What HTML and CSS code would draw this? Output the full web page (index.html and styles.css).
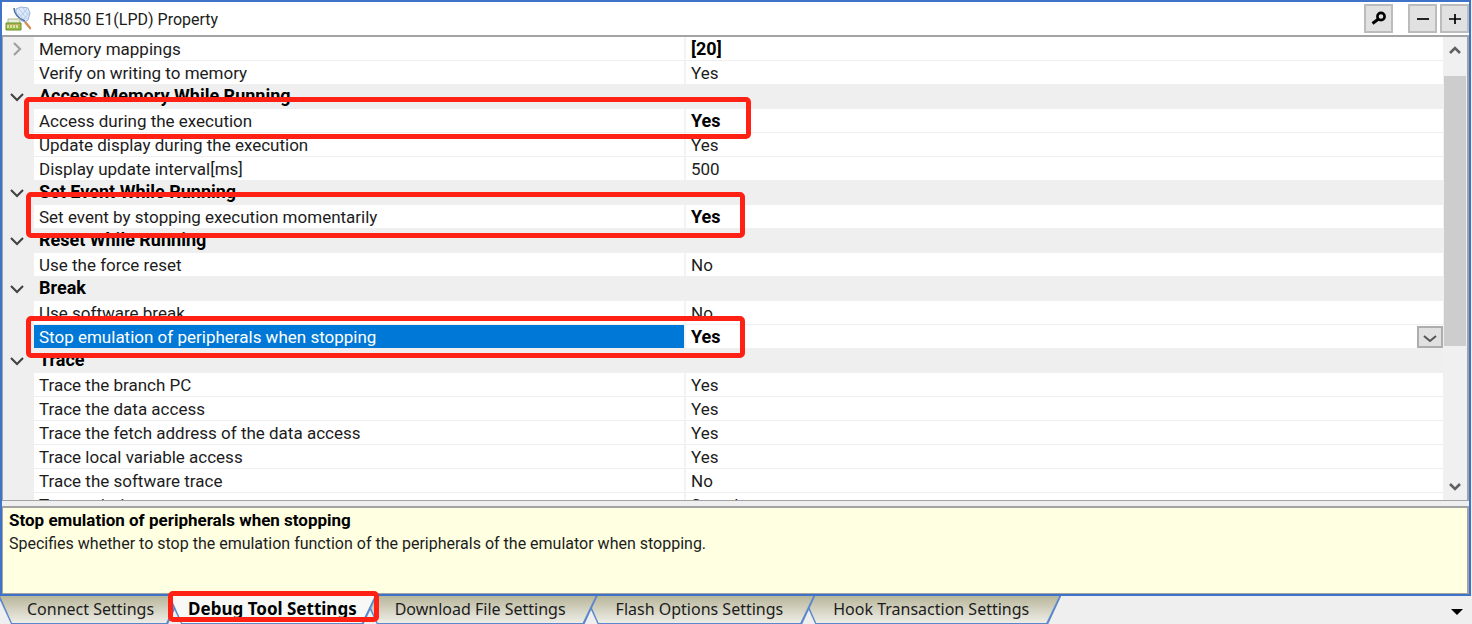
FILE: index.html
```
<!DOCTYPE html>
<html lang="en">
<head>
<meta charset="utf-8">
<title>RH850 E1(LPD) Property</title>
<link rel="stylesheet" href="styles.css">
</head>
<body>
<main class="panel">
  <header class="titlebar">
    <svg class="logo" width="26" height="26" viewBox="0 0 26 26" aria-hidden="true">
      <path d="M11 3l5-2 7 1 2 5-2 7-3 2-3-1-6-8z" fill="#dce9fb" stroke="#9ab2d8"/>
      <path d="M14 3l8 10M18 2l5 7M13 7l6 7M22 3l-6 7M24 7l-5 6" stroke="#a9bfe2" stroke-width=".7"/>
      <path d="M9 2c0 5 4 11 11 13" fill="none" stroke="#5573a9" stroke-width="1.600"/>
      <path d="M20 16l6 7" stroke="#d58b52" stroke-width="2.400"/>
      <path d="M3 13h12v5H3z" fill="#e9eddc" stroke="#a9b78c"/>
      <path d="M1 17h15v7H1z" fill="#9abb45" stroke="#6c9128"/>
      <path d="M2 19h13" stroke="#d9a46c"/>
      <path d="M3 19v3M6 19v3M9 19v3M12 19v3" stroke="#eef4ce" stroke-width="1.400"/>
    </svg>
    <h1 class="title">RH850 E1(LPD) Property</h1>
    <button class="tool search" aria-label="Search"><svg width="18" height="18" viewBox="0 0 18 18"><circle cx="11" cy="6.500" r="3.600" fill="none" stroke="#000" stroke-width="2.600"/><path d="M8.500 9L2.500 13.500" stroke="#000" stroke-width="3"/></svg></button>
    <button class="tool" aria-label="Collapse all"><svg width="18" height="18" viewBox="0 0 18 18"><path d="M3 9h12" stroke="#000" stroke-width="1.700"/></svg></button>
    <button class="tool" aria-label="Expand all"><svg width="18" height="18" viewBox="0 0 18 18"><path d="M3 9h12M9 4v10" stroke="#000" stroke-width="1.700"/></svg></button>
  </header>

  <section class="grid-box">
    <div class="grid">
      <table class="props">
        <colgroup><col class="c-gutter"><col class="c-name"><col></colgroup>
        <tbody>
        <tr><td class="gutter"><svg class="chev" width="16" height="16" viewBox="0 0 16 16"><path d="M5 2l6 6-6 6" fill="none" stroke="#a0a0a0" stroke-width="2.200"/></svg></td><td>Memory mappings</td><td><b>[20]</b></td></tr>
        <tr><td class="gutter"></td><td>Verify on writing to memory</td><td>Yes</td></tr>
        <tr class="group"><td class="gutter"><svg class="chev" width="16" height="16" viewBox="0 0 16 16"><path d="M2 5l6 6 6-6" fill="none" stroke="#444" stroke-width="2.200"/></svg></td><th colspan="2">Access Memory While Running</th></tr>
        <tr class="call call-wide"><td class="gutter"></td><td>Access during the execution</td><td><b>Yes</b></td></tr>
        <tr><td class="gutter"></td><td>Update display during the execution</td><td>Yes</td></tr>
        <tr><td class="gutter"></td><td>Display update interval[ms]</td><td>500</td></tr>
        <tr class="group"><td class="gutter"><svg class="chev" width="16" height="16" viewBox="0 0 16 16"><path d="M2 5l6 6 6-6" fill="none" stroke="#444" stroke-width="2.200"/></svg></td><th colspan="2">Set Event While Running</th></tr>
        <tr class="call call-tall"><td class="gutter"></td><td>Set event by stopping execution momentarily</td><td><b>Yes</b></td></tr>
        <tr class="group"><td class="gutter"><svg class="chev" width="16" height="16" viewBox="0 0 16 16"><path d="M2 5l6 6 6-6" fill="none" stroke="#444" stroke-width="2.200"/></svg></td><th colspan="2">Reset While Running</th></tr>
        <tr><td class="gutter"></td><td>Use the force reset</td><td>No</td></tr>
        <tr class="group"><td class="gutter"><svg class="chev" width="16" height="16" viewBox="0 0 16 16"><path d="M2 5l6 6 6-6" fill="none" stroke="#444" stroke-width="2.200"/></svg></td><th colspan="2">Break</th></tr>
        <tr><td class="gutter"></td><td>Use software break</td><td>No</td></tr>
        <tr class="call selected"><td class="gutter"></td><td>Stop emulation of peripherals when stopping</td><td><div class="value"><b>Yes</b><button class="drop" aria-label="Choose value"><svg width="16" height="16" viewBox="0 0 16 16"><path d="M2 7l6 5 6-5" fill="none" stroke="#555" stroke-width="2"/></svg></button></div></td></tr>
        <tr class="group"><td class="gutter"><svg class="chev" width="16" height="16" viewBox="0 0 16 16"><path d="M2 5l6 6 6-6" fill="none" stroke="#444" stroke-width="2.200"/></svg></td><th colspan="2">Trace</th></tr>
        <tr><td class="gutter"></td><td>Trace the branch PC</td><td>Yes</td></tr>
        <tr><td class="gutter"></td><td>Trace the data access</td><td>Yes</td></tr>
        <tr><td class="gutter"></td><td>Trace the fetch address of the data access</td><td>Yes</td></tr>
        <tr><td class="gutter"></td><td>Trace local variable access</td><td>Yes</td></tr>
        <tr><td class="gutter"></td><td>Trace the software trace</td><td>No</td></tr>
        <tr><td class="gutter"></td><td>Trace priority</td><td>Speed</td></tr>
        </tbody>
      </table>
    </div>
    <div class="scroll" aria-hidden="true">
      <svg width="16" height="16" viewBox="0 0 16 16"><path d="M3 11l5-5 5 5" fill="none" stroke="#606060" stroke-width="2.600"/></svg>
      <div class="track"><div class="thumb"></div></div>
      <svg width="16" height="16" viewBox="0 0 16 16"><path d="M3 5l5 5 5-5" fill="none" stroke="#606060" stroke-width="2.600"/></svg>
    </div>
  </section>

  <section class="help">
    <h2>Stop emulation of peripherals when stopping</h2>
    <p>Specifies whether to stop the emulation function of the peripherals of the emulator when stopping.</p>
  </section>
</main>

<nav class="tabs">
  <div class="slot first"><button class="tab">Connect Settings</button></div>
  <div class="slot active"><button class="tab">Debug Tool Settings</button></div>
  <div class="slot third"><button class="tab">Download File Settings</button></div>
  <div class="slot fourth"><button class="tab">Flash Options Settings</button></div>
  <div class="slot"><button class="tab">Hook Transaction Settings</button></div>
  <button class="more" aria-label="More tabs"><svg width="14" height="8" viewBox="0 0 14 8"><path d="M1 1h12L7 7z" fill="#000"/></svg></button>
</nav>
</body>
</html>
```
FILE: styles.css
```
*, *::before, *::after { box-sizing: border-box; }
body {
  margin: 0;
  height: 100vh;
  display: flex;
  flex-direction: column;
  background: #efefef;
  color: #1c1c1c;
  font: 16px/24px Roboto, "Liberation Sans", sans-serif;
}
button { font: inherit; color: inherit; margin: 0; padding: 0; }
.panel {
  flex: 1;
  min-height: 0;
  display: flex;
  flex-direction: column;
  border: 2px solid #3f73c8;
  margin-right: 1px;
}
.titlebar {
  display: flex;
  align-items: center;
  height: 33px;
  padding: 0 0 0 3px;
  background: #fff;
}
.title { flex: 1; margin: 0 0 0 12px; padding-top: 2px; font-size: 16px; font-weight: 400; }
.tool {
  width: 29px;
  height: 29px;
  margin-left: 3px;
  display: grid;
  place-items: center;
  background: #e1e1e1;
  border: 2px solid #bcbcbc;
}
.search { margin-right: 12px; }

.grid-box {
  flex: 1;
  min-height: 0;
  display: flex;
  border: 2px solid #a3a3a3;
  border-width: 2px 2px 1px 1px;
}
.grid {
  flex: 1;
  overflow: hidden;
  background: #efefef;
}
.props {
  width: 100%;
  table-layout: fixed;
  border-collapse: separate;
  border-spacing: 0;
  font-size: 17px;
}
.c-gutter { width: 31px; }
.c-name { width: 652px; }
.props td, .props th {
  height: 24px;
  padding: 1px 5px 0;
  line-height: 22px;
  text-align: left;
  white-space: nowrap;
  background: #fff;
  border-bottom: 1px solid #efefef;
}
.props td:nth-child(2) { border-right: 2px solid #f3f3f3; }
.props .gutter { background: #efefef; padding: 0 0 0 6px; }
.props .group th { padding: 0 5px 1px; background: #efefef; color: #000; font-size: 18px; }
.props b { color: #000; font-size: 18px; }
.chev { display: block; }
.props .selected td:nth-child(2) { background: #0078d7; color: #fff; }
.props .selected td:last-child { padding-right: 0; }
.value { display: flex; justify-content: space-between; }
.drop {
  width: 26px;
  height: 22px;
  display: grid;
  place-items: center;
  background: #e1e1e1;
  border: 2px solid #adadad;
}

/* red callouts drawn over the highlighted rows */
.call .gutter { position: relative; }
.call .gutter::after {
  content: "";
  position: absolute;
  z-index: 1;
  left: 23px;
  top: -9px;
  width: 719px;
  height: 42px;
  border: 5px solid #ff2113;
  border-radius: 5px;
}
.call-wide .gutter::after { left: 21px; width: 727px; top: -12px; }
.call-tall .gutter::after { height: 46px; top: -13px; }

.scroll {
  width: 24px;
  display: flex;
  flex-direction: column;
  align-items: center;
  padding: 5px 0;
  background: #f0f0f0;
}
.track { flex: 1; align-self: stretch; padding-top: 18px; }
.thumb { height: 67%; margin: 0 1px; background: #cdcdcd; }

.help {
  height: 88px;
  margin-top: 5px;
  padding: 1px 6px;
  background: #ffffe1;
  border: 2px solid #a3a3a3;
  border-width: 2px 2px 1px 1px;
}
.help h2, .help p { margin: 0; font-size: 16px; line-height: 23px; }
.help h2 { color: #000; font-size: 17px; }

.tabs {
  display: flex;
  height: 28px;
  font: 16px/24px "Noto Sans", sans-serif;
}
.slot { position: relative; z-index: 1; margin-left: -13px; }
.first { z-index: 4; margin-left: -2px; }
.third { z-index: 3; }
.fourth { z-index: 2; }
.active { z-index: 5; }
.tab {
  position: relative;
  height: 28px;
  padding: 0 32px 2px 31px;
  border: 0;
  background: #5b87cc;
  clip-path: polygon(0 0, 100% 0, calc(100% - 13px) 100%, 13px 100%);
}
.tab::before {
  content: "";
  position: absolute;
  inset: 0;
  z-index: -1;
  background: linear-gradient(#b8b69a, #f1f0ea);
  clip-path: polygon(2px 0, calc(100% - 2px) 0, calc(100% - 15px) 27px, 14px 27px);
}
.first .tab { padding: 0 27px 2px 29px; }
.active .tab { padding: 0 20px 2px; font-size: 17px; font-weight: 700; color: #000; }
.active .tab::before { background: #f8f8f6; }
.active::after {
  content: "";
  position: absolute;
  inset: -5px -2px 2px 0;
  border: 5px solid #ff2113;
  border-radius: 5px;
}
.more { margin-left: auto; margin-right: 8px; border: 0; background: none; }
```
